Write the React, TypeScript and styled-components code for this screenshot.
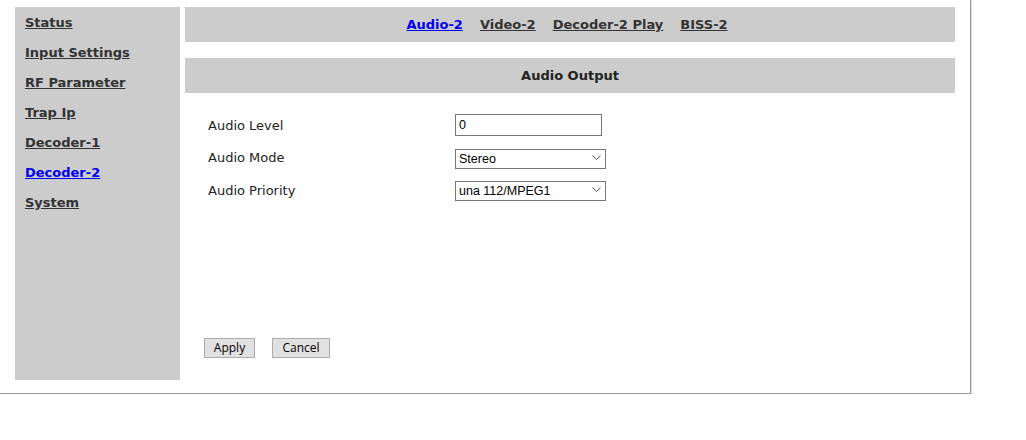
import React from "react";
import styled, { createGlobalStyle } from "styled-components";

const Global = createGlobalStyle`
  html, body { margin: 0; padding: 0; background: #fff; }
  body { font-family: "DejaVu Sans", Verdana, sans-serif; }
`;

const Frame = styled.div`
  width: 971px;
  height: 394px;
  box-sizing: border-box;
  border-right: 1px solid #9a9a9a;
  border-bottom: 1px solid #9a9a9a;
  box-shadow: 1px 1px 0 #dcdcdc;
  padding: 7px 0 13px 15px;
  display: flex;
  gap: 5px;
`;

const Sidebar = styled.nav`
  width: 165px;
  background: #cccccc;
  display: flex;
  flex-direction: column;
  padding: 1px 0 0 10px;
  box-sizing: border-box;
`;

const SideLink = styled.a<{ $active?: boolean }>`
  display: block;
  height: 30px;
  line-height: 30px;
  font-size: 13px;
  font-weight: bold;
  color: ${(p) => (p.$active ? "#0000ee" : "#333333")};
  text-decoration: underline;
  cursor: pointer;
`;

const Main = styled.div`
  width: 770px;
  display: flex;
  flex-direction: column;
`;

const TabBar = styled.div`
  height: 35px;
  background: #cccccc;
  display: flex;
  justify-content: center;
  align-items: center;
  gap: 17px;
  padding-right: 6px;
`;

const TabLink = styled.a<{ $active?: boolean }>`
  font-size: 13px;
  font-weight: bold;
  color: ${(p) => (p.$active ? "#0000ee" : "#333333")};
  text-decoration: underline;
  cursor: pointer;
`;

const SectionHeader = styled.div`
  margin-top: 16px;
  height: 35px;
  background: #cccccc;
  display: flex;
  justify-content: center;
  align-items: center;
  font-size: 13px;
  font-weight: bold;
  color: #222;
`;

const Form = styled.div`
  padding: 16px 0 0 23px;
  display: grid;
  grid-template-columns: 247px auto;
  grid-auto-rows: 32.5px;
  align-items: center;
`;

const Label = styled.div`
  font-family: "DejaVu Sans", Verdana, sans-serif;
  font-size: 13px;
  color: #222;
`;

const TextInput = styled.input`
  width: 147px;
  height: 22px;
  box-sizing: border-box;
  border: 1px solid #767676;
  padding: 1px 3px;
  font-family: "Liberation Sans", Arial, sans-serif;
  font-size: 12.5px;
  color: #000;
  outline: none;
  justify-self: start;
`;

const SelectWrap = styled.div`
  position: relative;
  width: 151px;
  height: 20px;
  justify-self: start;
`;

const Select = styled.select`
  appearance: none;
  -webkit-appearance: none;
  width: 151px;
  height: 20px;
  box-sizing: border-box;
  border: 1px solid #767676;
  border-radius: 0;
  background: #fff;
  padding: 0 3px;
  font-family: "Liberation Sans", Arial, sans-serif;
  font-size: 12.5px;
  color: #000;
  outline: none;
`;

const Chevron = styled.svg`
  position: absolute;
  right: 5px;
  top: 7px;
  pointer-events: none;
`;

const Buttons = styled.div`
  margin-top: auto;
  margin-bottom: 22px;
  padding-left: 19px;
  display: flex;
  gap: 17px;
`;

const Button = styled.button<{ $w: number }>`
  width: ${(p) => p.$w}px;
  height: 20px;
  box-sizing: border-box;
  background: #e1e1e1;
  border: 1px solid #adadad;
  border-radius: 0;
  font-family: "Open Sans", "Noto Sans", sans-serif;
  font-size: 12px;
  color: #000;
  padding: 0;
  line-height: 18px;
`;

const Dropdown: React.FC<{ value: string; options: string[] }> = ({ value, options }) => (
  <SelectWrap>
    <Select defaultValue={value}>
      {options.map((o) => (
        <option key={o}>{o}</option>
      ))}
    </Select>
    <Chevron width="9" height="6" viewBox="0 0 9 6">
      <path d="M0.5 0.5 L4.5 4.5 L8.5 0.5" fill="none" stroke="#555" strokeWidth="1" />
    </Chevron>
  </SelectWrap>
);

export default function App() {
  const side = ["Status", "Input Settings", "RF Parameter", "Trap Ip", "Decoder-1", "Decoder-2", "System"];
  const tabs = ["Audio-2", "Video-2", "Decoder-2 Play", "BISS-2"];
  return (
    <>
      <Global />
      <Frame>
        <Sidebar>
          {side.map((s) => (
            <SideLink key={s} $active={s === "Decoder-2"}>
              {s}
            </SideLink>
          ))}
        </Sidebar>
        <Main>
          <TabBar>
            {tabs.map((t) => (
              <TabLink key={t} $active={t === "Audio-2"}>
                {t}
              </TabLink>
            ))}
          </TabBar>
          <SectionHeader>Audio Output</SectionHeader>
          <Form>
            <Label>Audio Level</Label>
            <TextInput defaultValue="0" />
            <Label>Audio Mode</Label>
            <Dropdown value="Stereo" options={["Stereo", "Mono", "Left", "Right"]} />
            <Label>Audio Priority</Label>
            <Dropdown value="una 112/MPEG1" options={["una 112/MPEG1", "AC3"]} />
          </Form>
          <Buttons>
            <Button $w={51}>Apply</Button>
            <Button $w={58}>Cancel</Button>
          </Buttons>
        </Main>
      </Frame>
    </>
  );
}
